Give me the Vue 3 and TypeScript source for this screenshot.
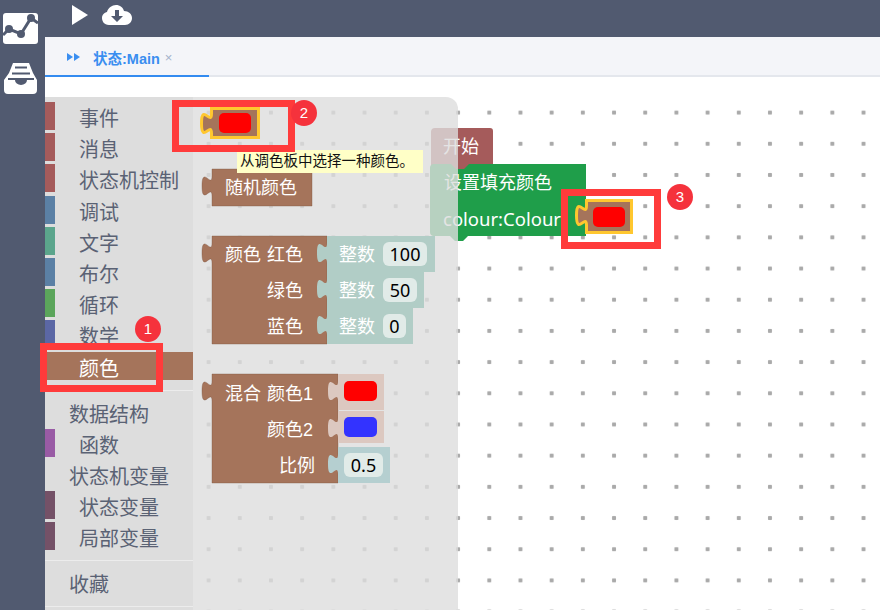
<script setup lang="ts">
interface Category {
  label?: string
  color?: string
  active?: boolean
  sep?: boolean
}

const categories: Category[] = [
  { label: '事件', color: '#a55b5b' },
  { label: '消息', color: '#a55b5b' },
  { label: '状态机控制', color: '#a55b5b' },
  { label: '调试', color: '#5b80a5' },
  { label: '文字', color: '#5ba58c' },
  { label: '布尔', color: '#5b80a5' },
  { label: '循环', color: '#5ba55b' },
  { label: '数学', color: '#5b67a5' },
  { label: '颜色', color: '#a5745b', active: true },
  { sep: true },
  { label: '数据结构' },
  { label: '函数', color: '#995ba5' },
  { label: '状态机变量' },
  { label: '状态变量', color: '#745167' },
  { label: '局部变量', color: '#745167' },
  { sep: true },
  { label: '收藏' },
  { sep: true }
]

// block with an output tab sticking out of its left edge
function tabbed(x: number, y: number, w: number, h: number, tabY = 7) {
  return `M${x},${y} H${x + w} V${y + h} H${x} V${y + tabY + 20} c0,-13 -10,11 -10,-10 s10,3 10,-10 Z`
}

const numberRows = [
  { y: 236, w: 108, fieldW: 44, value: '100' },
  { y: 272, w: 97, fieldW: 34, value: '50' },
  { y: 308, w: 86, fieldW: 23, value: '0' }
]

const colourLabels = [
  { y: 261, text: '红色' },
  { y: 297, text: '绿色' },
  { y: 333, text: '蓝色' }
]

const marks = [
  { id: 1, cls: 'mark-a' },
  { id: 2, cls: 'mark-b' },
  { id: 3, cls: 'mark-c' }
]
</script>

<template>
  <div class="app">
    <nav class="rail">
      <svg class="rail-icon" width="35" height="31" viewBox="3 13 35 31">
        <rect x="3" y="13" width="35" height="31" rx="3" fill="#fff" />
        <polyline points="3,35 9,29 21,34 31,18 38,23" fill="none" stroke="#515a70" stroke-width="3" />
        <circle cx="9" cy="29" r="4" fill="#515a70" />
        <circle cx="21" cy="34" r="4" fill="#515a70" />
        <circle cx="31" cy="18" r="4" fill="#515a70" />
      </svg>
      <svg class="rail-icon inbox" width="33" height="31" viewBox="4 63 33 31">
        <path
          d="M13,63 H29 L33,73 L37,80 V90 a4,4 0 0 1 -4,4 H8 a4,4 0 0 1 -4,-4 V80 L9,73 Z"
          fill="#fff"
        />
        <path d="M15,67.5 H27 M12,73.5 H30 M8,79 H34" stroke="#515a70" stroke-width="2" fill="none" />
        <path d="M15,79 H27 V80 a6,5 0 0 1 -12,0 Z" fill="#515a70" />
      </svg>
    </nav>

    <div class="main">
      <header class="toolbar">
        <svg width="16" height="20" viewBox="0 0 16 20">
          <path d="M0,0 L16,10 L0,20 Z" fill="#fff" />
        </svg>
        <svg width="30" height="20" viewBox="0 0 30 20">
          <path
            d="M7,20 C2,20 0,16 0,13 C0,9.500 2.500,7.500 5,7 C6,3 10,0 14,0 C18,0 21,2.500 22,6 C26.500,6 30,9 30,13 C30,17 27,20 23,20 Z"
            fill="#fff"
          />
          <path d="M13,5 h4 v6 h4 l-6,6 l-6,-6 h4 Z" fill="#515a70" />
        </svg>
      </header>

      <div class="tabs">
        <div class="tab">
          <svg width="13" height="8" viewBox="0 0 13 8">
            <path d="M0,0 L6,4 L0,8 Z M7,0 L13,4 L7,8 Z" fill="#3a8ef0" />
          </svg>
          <span class="tab-title">状态:Main</span>
          <span class="tab-close">×</span>
        </div>
      </div>

      <div class="gap"></div>

      <div class="workspace">
        <aside class="toolbox">
          <template v-for="(cat, i) in categories" :key="i">
            <div v-if="cat.sep" class="sep"></div>
            <div v-else class="cat" :class="{ active: cat.active }">
              <i v-if="cat.color" class="stripe" :style="{ background: cat.color }"></i>
              <span>{{ cat.label }}</span>
            </div>
          </template>
        </aside>

        <div class="canvas">
          <svg class="layer" viewBox="193 97 687 513" width="687" height="513">
            <path
              d="M435,128 H490 a3,3 0 0 1 3,3 V165 H469 l-5,5 h-8 l-5,-5 H431 V132 a4,4 0 0 1 4,-4 Z"
              fill="#a55b5b"
            />
            <path
              d="M434,164 H451 l5,5 h8 l5,-5 H586 V236 H468 l-5,5 h-8 l-5,-5 H434 a4,4 0 0 1 -4,-4 V168 a4,4 0 0 1 4,-4 Z"
              fill="#1f9e4a"
            />
            <text x="443" y="153" class="label">开始</text>
            <text x="444" y="189" class="label">设置填充颜色</text>
            <text x="443" y="226" class="label latin">colour:Colour</text>
            <path :d="tabbed(586.5, 200.5, 45, 32, 5)" class="picked" />
            <rect x="593" y="207" width="32" height="20" rx="5" fill="#f00" />
          </svg>
        </div>

        <div class="flyout">
          <svg class="layer" viewBox="193 97 265 513" width="265" height="513">
            <path :d="tabbed(211.5, 108.5, 47, 29, 5)" class="picked" />
            <rect x="219" y="113" width="32" height="20" rx="5" fill="#f00" />

            <path :d="tabbed(212, 169, 100, 37)" class="brown" />
            <text x="225" y="194" class="label">随机颜色</text>

            <path :d="tabbed(212, 236, 115, 108)" class="brown" />
            <text x="225" y="261" class="label">颜色</text>
            <text v-for="l in colourLabels" :key="l.text" x="267" :y="l.y" class="label">{{ l.text }}</text>
            <template v-for="row in numberRows" :key="row.value">
              <path :d="tabbed(327, row.y, row.w, 36)" class="number" />
              <text x="339" :y="row.y + 25" class="label">整数</text>
              <rect x="383" :y="row.y + 6" :width="row.fieldW" height="24" rx="6" class="field" />
              <text :x="383 + row.fieldW / 2" :y="row.y + 25" class="value">{{ row.value }}</text>
            </template>

            <path :d="tabbed(212, 374, 126, 109)" class="brown" />
            <text x="225" y="400" class="label">混合</text>
            <text x="267" y="400" class="label">颜色1</text>
            <text x="267" y="436" class="label">颜色2</text>
            <text x="279" y="472" class="label">比例</text>
            <path :d="tabbed(338, 374, 46, 36)" class="shadow" />
            <rect x="344" y="381" width="33" height="20" rx="5" fill="#f00" />
            <path :d="tabbed(338, 411, 46, 32)" class="shadow" />
            <rect x="344" y="417" width="33" height="20" rx="5" fill="#33f" />
            <path :d="tabbed(338, 447, 52, 36)" class="number alt" />
            <rect x="344" y="453" width="39" height="24" rx="6" class="field" />
            <text x="363.500" y="472" class="value">0.5</text>
          </svg>
        </div>
      </div>
    </div>

    <div class="tooltip">从调色板中选择一种颜色。</div>

    <template v-for="m in marks" :key="m.id">
      <div class="mark" :class="m.cls"></div>
      <div class="badge" :class="m.cls">{{ m.id }}</div>
    </template>
  </div>
</template>

<style scoped>
.app {
  position: relative;
  display: flex;
  width: 880px;
  height: 610px;
  overflow: hidden;
  background: #fff;
  font-family: "Liberation Sans", "Noto Sans CJK SC", sans-serif;
}

.rail {
  width: 45px;
  flex: none;
  display: flex;
  flex-direction: column;
  background: #515a70;
  padding: 13px 0 0 3px;
  box-sizing: border-box;
}

.rail-icon.inbox {
  margin: 19px 0 0 1px;
}

.main {
  flex: 1;
  display: flex;
  flex-direction: column;
  min-width: 0;
}

.toolbar {
  height: 37px;
  flex: none;
  display: flex;
  align-items: flex-start;
  gap: 14px;
  padding: 5px 0 0 27px;
  box-sizing: border-box;
  background: #515a70;
}

.tabs {
  height: 40px;
  flex: none;
  background: #f4f5f9;
  border-bottom: 2px solid #e4e7ed;
  box-sizing: border-box;
}

.tab {
  width: 164px;
  height: 40px;
  box-sizing: border-box;
  display: flex;
  align-items: center;
  padding: 2px 0 0 22px;
  border-bottom: 2px solid #338bf0;
  color: #3a8ef0;
}

.tab-title {
  margin-left: 13px;
  font-size: 14.500px;
  font-weight: 700;
}

.tab-close {
  margin-left: 5px;
  font-size: 13px;
  color: #a5b2cc;
}

.gap {
  height: 20px;
  flex: none;
}

.workspace {
  position: relative;
  flex: 1;
  display: flex;
  min-height: 0;
}

.toolbox {
  width: 148px;
  flex: none;
  padding-top: 5px;
  box-sizing: border-box;
  background: #ddd;
  z-index: 2;
}

.cat {
  display: flex;
  align-items: center;
  height: 28px;
  margin-bottom: 3.200px;
  font-size: 20px;
  color: #5a6274;
}

.cat.active {
  background: #a5745b;
  color: #fff;
}

.cat > span {
  padding: 3px 0 0 24px;
}

.stripe {
  width: 10px;
  height: 100%;
  flex: none;
}

.sep {
  height: 1px;
  margin: 10px 0 7px;
  background: #ececec;
}

.canvas {
  flex: 1;
  position: relative;
  background-image: radial-gradient(circle, #aaa 2px, transparent 2.500px);
  background-size: 31.200px 31.200px;
}

.flyout {
  position: absolute;
  left: 148px;
  top: 0;
  bottom: 0;
  width: 265px;
  background: rgba(221, 221, 221, 0.8);
  border-top-right-radius: 12px;
}

.layer {
  position: absolute;
  left: 0;
  top: 0;
  display: block;
}

.label {
  font-size: 18px;
  fill: #fff;
}

.label.latin {
  font-family: "Noto Sans", "Liberation Sans", sans-serif;
  font-size: 18.500px;
}

.value {
  font-family: "Noto Sans", "Liberation Sans", sans-serif;
  font-size: 18px;
  fill: #000;
  text-anchor: middle;
}

.brown {
  fill: #a5745b;
  stroke: rgba(120, 80, 60, 0.35);
}

.picked {
  fill: #a5745b;
  stroke: #ffc72f;
  stroke-width: 3;
}

.number {
  fill: #b1cdc6;
}

.number.alt {
  fill: #b5cfd0;
}

.shadow {
  fill: #dcc8c0;
}

.field {
  fill: #e1ebe8;
}

.tooltip {
  position: absolute;
  left: 237px;
  top: 150px;
  z-index: 3;
  width: 186px;
  height: 23px;
  box-sizing: border-box;
  padding: 2px 0 0 3px;
  background: #ffffc7;
  font-size: 14.500px;
  line-height: 19px;
  color: #111;
  white-space: nowrap;
}

.mark {
  position: absolute;
  z-index: 4;
  box-sizing: border-box;
  border: 7px solid #ff3b3b;
}

.mark.mark-a {
  left: 40px;
  top: 343px;
  width: 123px;
  height: 49px;
}

.mark.mark-b {
  left: 172px;
  top: 100px;
  width: 123px;
  height: 52px;
}

.mark.mark-c {
  left: 561px;
  top: 189px;
  width: 100px;
  height: 60px;
}

.badge {
  position: absolute;
  z-index: 5;
  width: 26px;
  height: 26px;
  border-radius: 50%;
  background: #f5323c;
  color: #fff;
  font-size: 15px;
  line-height: 26px;
  text-align: center;
}

.badge.mark-a {
  left: 135px;
  top: 316px;
}

.badge.mark-b {
  left: 291px;
  top: 100px;
}

.badge.mark-c {
  left: 667px;
  top: 184px;
}
</style>

<style>
html,
body {
  margin: 0;
  overflow: hidden;
}
</style>
